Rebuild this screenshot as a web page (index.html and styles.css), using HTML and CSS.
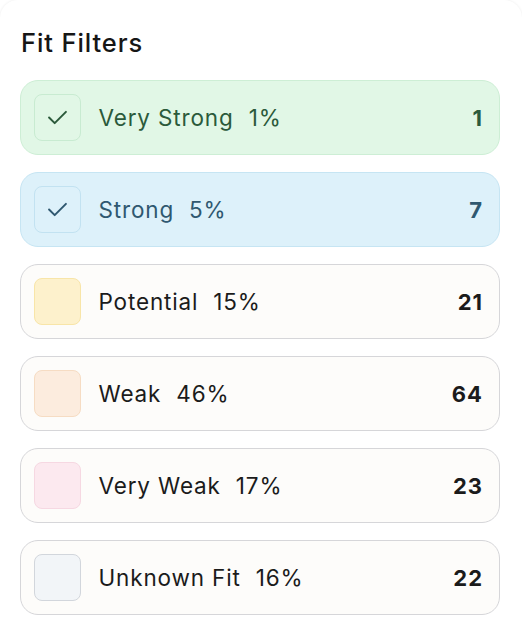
FILE: index.html
```html
<!DOCTYPE html>
<html>
<head>
<meta charset="utf-8">
<link rel="stylesheet" href="styles.css">
</head>
<body>
<div class="card">
  <h2 class="title">Fit Filters</h2>
  <div class="list">
    <div class="row row-vstrong">
      <span class="box checked"><svg viewBox="0 0 22 16" width="21" height="15"><path d="M2 8l6 6L20 2" fill="none" stroke="currentColor" stroke-width="2.1" stroke-linecap="round" stroke-linejoin="round"/></svg></span>
      <span class="label">Very Strong<span class="pct">1%</span></span>
      <span class="count">1</span>
    </div>
    <div class="row row-strong">
      <span class="box checked"><svg viewBox="0 0 22 16" width="21" height="15"><path d="M2 8l6 6L20 2" fill="none" stroke="currentColor" stroke-width="2.1" stroke-linecap="round" stroke-linejoin="round"/></svg></span>
      <span class="label">Strong<span class="pct">5%</span></span>
      <span class="count">7</span>
    </div>
    <div class="row">
      <span class="box box-potential"></span>
      <span class="label">Potential<span class="pct">15%</span></span>
      <span class="count">21</span>
    </div>
    <div class="row">
      <span class="box box-weak"></span>
      <span class="label">Weak<span class="pct">46%</span></span>
      <span class="count">64</span>
    </div>
    <div class="row">
      <span class="box box-vweak"></span>
      <span class="label">Very Weak<span class="pct">17%</span></span>
      <span class="count">23</span>
    </div>
    <div class="row">
      <span class="box box-unknown"></span>
      <span class="label">Unknown Fit<span class="pct">16%</span></span>
      <span class="count">22</span>
    </div>
  </div>
</div>
</body>
</html>
```

FILE: styles.css
```css
html, body {
  margin: 0;
  padding: 0;
  background: #ffffff;
}
body {
  font-family: Inter, "Noto Sans", sans-serif;
  width: 522px;
  height: 644px;
  overflow: hidden;
}
.card {
  background: #ffffff;
  border-radius: 18px;
  box-shadow: 0 0 3px rgba(0, 0, 0, 0.08);
  height: 660px;
  padding: 26px 22px 0 20px;
  box-sizing: border-box;
}
.title {
  margin: 0 0 0 1px;
  font-size: 25.5px;
  font-weight: 500;
  color: #161616;
  line-height: 34px;
  letter-spacing: 0.9px;
}
.list {
  margin-top: 20px;
  display: flex;
  flex-direction: column;
  gap: 17px;
}
.row {
  height: 75px;
  box-sizing: border-box;
  border: 1.5px solid #d6d6d9;
  border-radius: 18px;
  background: #fdfcfa;
  display: flex;
  align-items: center;
  padding: 0 17px 0 12.5px;
  color: #1b1b1b;
}
.row-vstrong {
  background: #e1f7e6;
  border-color: #cdeed5;
  color: #2b5a3b;
}
.row-strong {
  background: #ddf1fa;
  border-color: #c6e5f3;
  color: #2f5870;
}
.box {
  width: 47px;
  height: 47px;
  box-sizing: border-box;
  border-radius: 8px;
  border: 1.5px solid #d3d7dd;
  flex: none;
  display: flex;
  align-items: center;
  justify-content: center;
}
.row-vstrong .box {
  border-color: #c8ebd1;
  background: #e1f7e6;
}
.row-strong .box {
  border-color: #c2e2f1;
  background: #ddf1fa;
}
.box-potential { background: #fdf1cc; border-color: #f8e5a8; }
.box-weak { background: #fcecde; border-color: #f6dcc3; }
.box-vweak { background: #fce9ef; border-color: #f6d8e2; }
.box-unknown { background: #f2f5f8; border-color: #d2d6dc; }
.label {
  margin-left: 18px;
  font-size: 22.5px;
  font-weight: 400;
  flex: 1;
  letter-spacing: 0.85px;
}
.pct {
  margin-left: 15px;
}
.count {
  font-size: 22px;
  font-weight: 700;
  letter-spacing: 1px;
  margin-right: -1px;
}
```
